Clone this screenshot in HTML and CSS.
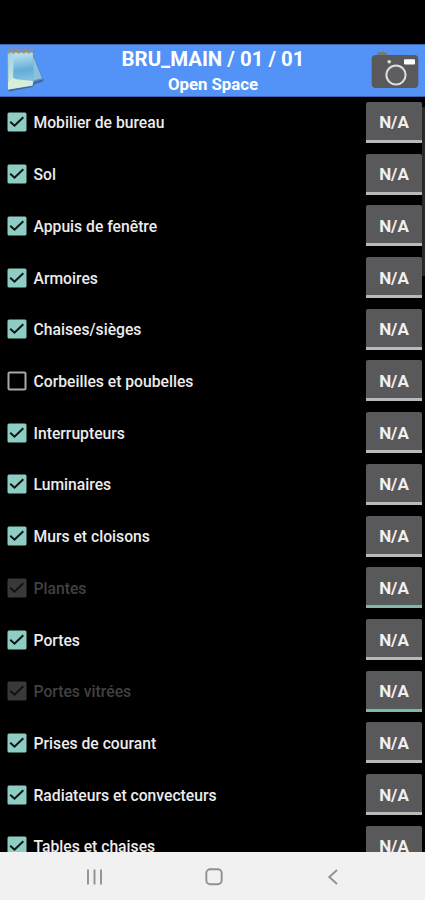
FILE: index.html
```
<!DOCTYPE html>
<html lang="fr">
<head>
<meta charset="utf-8">
<title>BRU_MAIN / 01 / 01</title>
<link rel="stylesheet" href="styles.css">
</head>
<body>
<svg class="defs" aria-hidden="true">
  <symbol id="on" viewBox="0 0 20 20"><rect x=".5" y=".5" width="19" height="19" rx="1.5" fill="currentColor"/><path d="M3.200 9.700 7.500 13.700 16.300 5.200" fill="none" stroke="#0b1513" stroke-width="2"/></symbol>
  <symbol id="off" viewBox="0 0 20 20"><rect x="1.500" y="1.500" width="17" height="17" rx="1" fill="none" stroke="#a8a8a8" stroke-width="2"/></symbol>
</svg>
<div class="screen">
  <header class="header">
    <svg class="notes" viewBox="0 0 40 46">
      <defs>
        <linearGradient id="page" x1="0" y1="0" x2=".1" y2="1"><stop offset="0" stop-color="#a5d3e6"/><stop offset=".5" stop-color="#b5dce0"/><stop offset="1" stop-color="#e2f3d5"/></linearGradient>
        <linearGradient id="front" x1="0" y1="0" x2=".1" y2="1"><stop offset="0" stop-color="#c4e6ee"/><stop offset=".65" stop-color="#62add8"/><stop offset="1" stop-color="#7fc0df"/></linearGradient>
      </defs>
      <path d="M3 42 27 38 30 34.500 39 32 38 34.500 30 37 27.500 40 4 44.500Z" fill="#44659b"/>
      <path d="M28 8 37.500 31.500 28 34 20 12Z" fill="#8bc1dc" stroke="#5382ae" stroke-width=".7"/>
      <path d="M2.500 5 28 5 27.500 38.500 3 42.500Z" fill="url(#page)" stroke="#679bbb" stroke-width=".6"/>
      <path d="M9 6 27.500 6 29 34 8 32Z" fill="url(#front)"/>
      <path d="M3 35 8 31 16 34 28 34 27.500 38.500 3 42.500Z" fill="#d6eedb"/>
      <path d="M4 7V3.500q1.500-3 3 0V6M9 7V3.500q1.500-3 3 0V6M14 7V3.500q1.500-3 3 0V6M19 7V3.500q1.500-3 3 0V6M24 7V3.500q1.500-3 3 0V6" fill="none" stroke="#a68f68" stroke-width="1.300"/>
    </svg>
    <div class="titles">
      <h1>BRU_MAIN / 01 / 01</h1>
      <h2>Open Space</h2>
    </div>
    <svg class="camera" viewBox="0 0 48 38">
      <path d="M6 5V3q0-2 2-2h6q2 0 2 2v2z" fill="#75797e"/>
      <rect x=".7" y="4" width="46.600" height="33" rx="4" fill="#59595b"/>
      <circle cx="25" cy="24" r="9.600" fill="#5e5e60" stroke="#dedede" stroke-width="2"/>
      <circle cx="18.200" cy="10.700" r="1.800" fill="#dedede"/>
      <rect x="33" y="8.300" width="11" height="5.300" rx="1" fill="#fff"/>
    </svg>
  </header>
  <main class="list">
    <div class="row"><svg class="box"><use href="#on"/></svg><span class="label">Mobilier de bureau</span><button class="na">N/A</button></div>
    <div class="row"><svg class="box"><use href="#on"/></svg><span class="label">Sol</span><button class="na">N/A</button></div>
    <div class="row"><svg class="box"><use href="#on"/></svg><span class="label">Appuis de fenêtre</span><button class="na">N/A</button></div>
    <div class="row"><svg class="box"><use href="#on"/></svg><span class="label">Armoires</span><button class="na">N/A</button></div>
    <div class="row"><svg class="box"><use href="#on"/></svg><span class="label">Chaises/sièges</span><button class="na">N/A</button></div>
    <div class="row"><svg class="box"><use href="#off"/></svg><span class="label">Corbeilles et poubelles</span><button class="na">N/A</button></div>
    <div class="row"><svg class="box"><use href="#on"/></svg><span class="label">Interrupteurs</span><button class="na">N/A</button></div>
    <div class="row"><svg class="box"><use href="#on"/></svg><span class="label">Luminaires</span><button class="na">N/A</button></div>
    <div class="row"><svg class="box"><use href="#on"/></svg><span class="label">Murs et cloisons</span><button class="na">N/A</button></div>
    <div class="row disabled"><svg class="box"><use href="#on"/></svg><span class="label">Plantes</span><button class="na">N/A</button></div>
    <div class="row"><svg class="box"><use href="#on"/></svg><span class="label">Portes</span><button class="na">N/A</button></div>
    <div class="row disabled"><svg class="box"><use href="#on"/></svg><span class="label">Portes vitrées</span><button class="na">N/A</button></div>
    <div class="row"><svg class="box"><use href="#on"/></svg><span class="label">Prises de courant</span><button class="na">N/A</button></div>
    <div class="row"><svg class="box"><use href="#on"/></svg><span class="label">Radiateurs et convecteurs</span><button class="na">N/A</button></div>
    <div class="row"><svg class="box"><use href="#on"/></svg><span class="label">Tables et chaises</span><button class="na">N/A</button></div>
    <div class="scrollbar"></div>
  </main>
  <nav class="nav">
    <svg viewBox="0 0 20 20"><path d="M3 2.500v15M9.500 2.500v15M16 2.500v15"/></svg>
    <svg viewBox="0 0 20 20"><rect x="2.300" y="2.300" width="15.400" height="15" rx="4"/></svg>
    <svg viewBox="0 0 20 20"><path d="M14 3 6.300 10 14 17"/></svg>
  </nav>
</div>
</body>
</html>
```
FILE: styles.css
```
* { box-sizing: border-box; }
body { margin: 0; background: #000; font-family: Roboto, "Liberation Sans", sans-serif; }
.defs { display: none; }
.screen { height: 900px; padding-top: 44px; display: flex; flex-direction: column; overflow: hidden; }
.header {
  flex: none;
  height: 53px;
  padding: 0 6px 0 5px;
  display: grid;
  grid-template-columns: 48px 1fr 48px;
  background: #5393f8;
  border-top: 1px solid #3a68b0;
  border-bottom: 1px solid #3a68b0;
}
.notes { width: 40px; height: 46px; margin-top: 2px; }
.camera { width: 48px; height: 38px; margin-top: 6px; }
.titles { padding-left: 2px; color: #fff; text-align: center; }
h1, h2 { margin: 0; font-weight: 700; white-space: nowrap; }
h1 { font-size: 20.4px; line-height: 24px; margin-top: 2px; }
h2 { font-size: 16.8px; line-height: 20px; margin-top: 3px; }
.list { flex: 1; min-height: 0; overflow: hidden; position: relative; }
.row {
  height: 51.73px;
  padding: 5px 3px 6px 7px;
  display: flex;
  align-items: center;
}
.box { flex: none; width: 20px; height: 20px; color: #8ecdc3; }
.label { flex: 1; margin-left: 6.5px; padding-top: 2px; color: #ececec; font-size: 15.7px; font-weight: 500; line-height: 22px; white-space: nowrap; }
.na {
  flex: none;
  width: 56px;
  height: 41px;
  padding: 3px 0 0;
  border: 0;
  border-bottom: 3px solid #b9b9b9;
  border-radius: 2px 2px 0 0;
  background: #59595b;
  color: #f0f0f0;
  font: 700 17px/20px Roboto, sans-serif;
}
.disabled .box { color: #393939; }
.disabled .label { color: #414141; }
.disabled .na { border-bottom-color: #7fb9ad; }
.scrollbar { position: absolute; top: 10px; right: 0; width: 3px; height: 169px; background: #29292b; }
.nav {
  flex: none;
  height: 48.5px;
  padding: 0 32px 0 35px;
  display: grid;
  grid-template-columns: repeat(3, 1fr);
  place-items: center;
  background: #f1f1f1;
}
.nav svg { width: 20px; height: 20px; margin-top: 2px; fill: none; stroke: #919191; stroke-width: 1.900; }
```
